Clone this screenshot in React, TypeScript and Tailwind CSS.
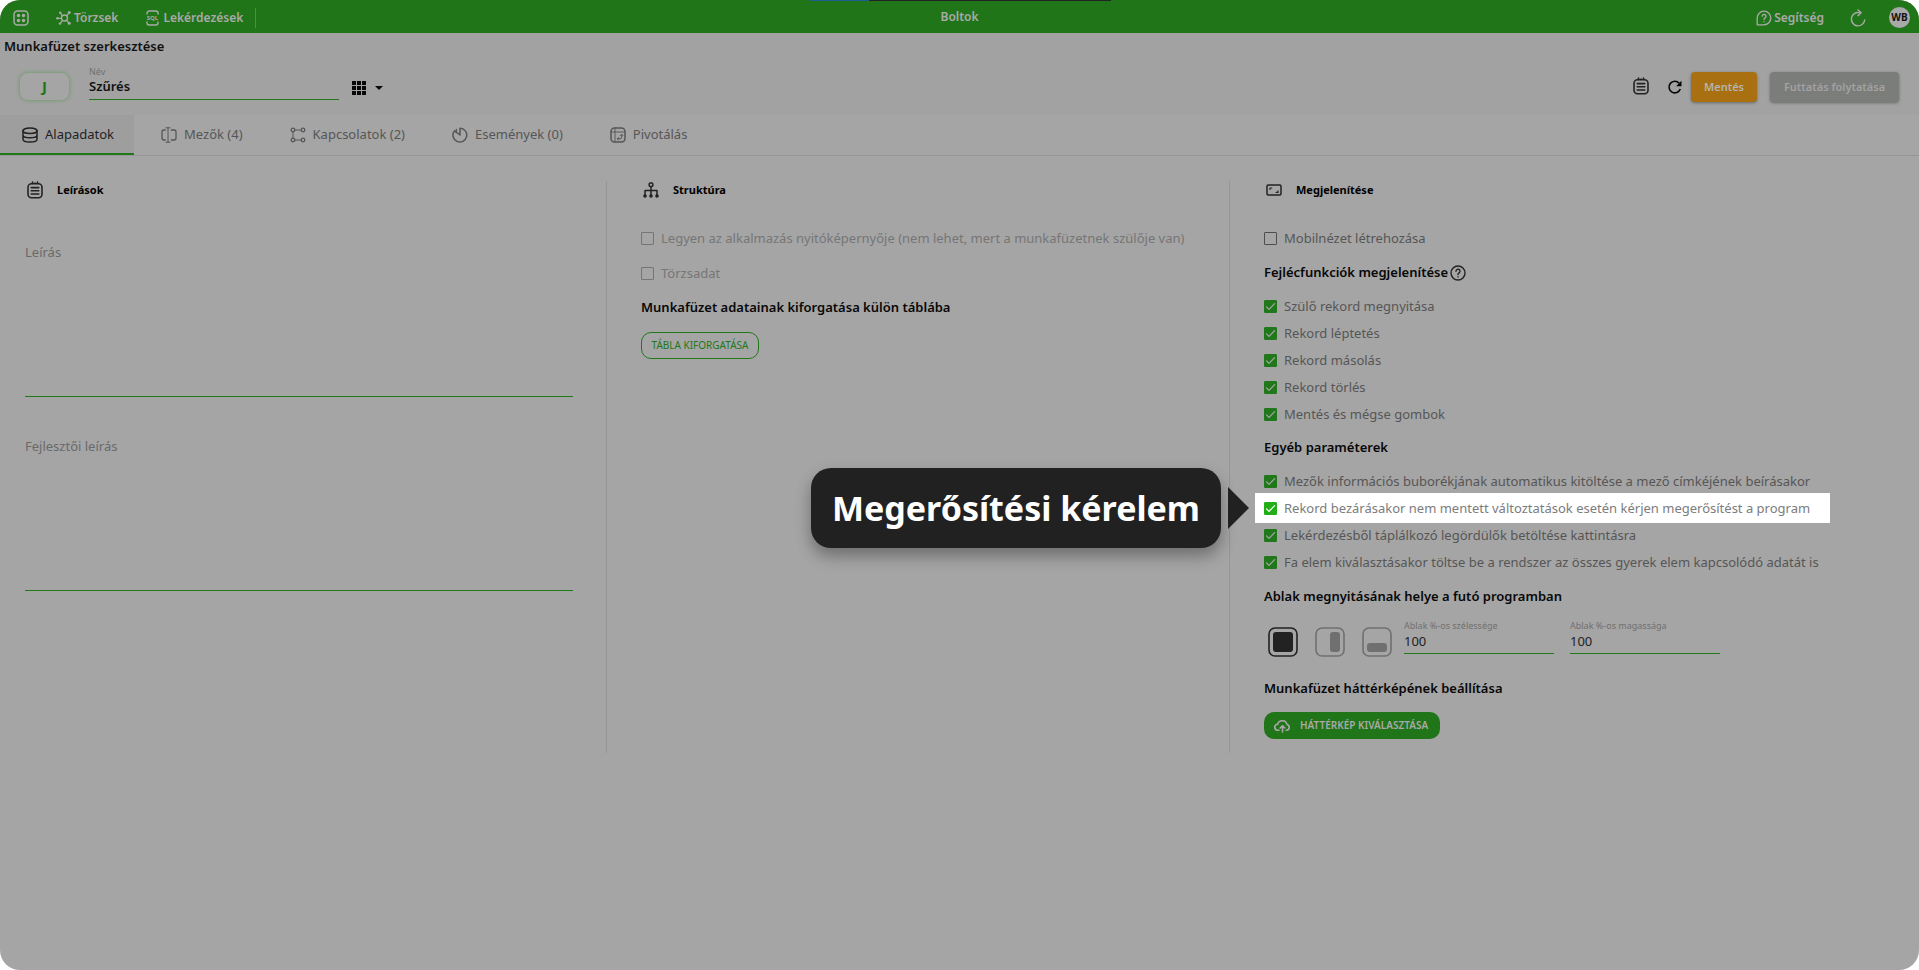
import { useState, type ReactNode } from "react";

const svgProps = {
  fill: "none",
  stroke: "currentColor",
  strokeLinecap: "round" as const,
  strokeLinejoin: "round" as const,
  "aria-hidden": true,
};

/* Icons */
const AppsIcon = () => (
  <svg viewBox="0 0 16 16" className="size-4" {...svgProps} strokeWidth="1.5">
    <rect x="1" y="1" width="14" height="14" rx="3.5" />
    <g fill="currentColor" stroke="none">
      <circle cx="5.5" cy="5.5" r="1.7" />
      <circle cx="10.5" cy="5.5" r="1.7" />
      <circle cx="5.5" cy="10.5" r="1.7" />
      <circle cx="10.5" cy="10.5" r="1.7" />
    </g>
  </svg>
);

const HubIcon = () => (
  <svg viewBox="0 0 16 16" className="size-4" {...svgProps} strokeWidth="1.3">
    <circle cx="8.5" cy="8" r="3" />
    <path d="M6.4 5.8 4.5 3.2M10.6 5.8l2.2-2.6M5.5 8.3H2M6.6 10.3l-2.2 2.9M10.6 10.2l2.2 2.6" />
    <g fill="currentColor" stroke="none">
      <circle cx="4.2" cy="2.8" r="1.2" />
      <circle cx="13.2" cy="2.5" r="1.5" />
      <circle cx="1.4" cy="8.3" r="1.2" />
      <circle cx="3.9" cy="13.6" r="1.2" />
      <circle cx="13.2" cy="13.3" r="1.5" />
    </g>
  </svg>
);

const SqlIcon = () => (
  <svg viewBox="0 0 13 16" className="h-4 w-[13px]" {...svgProps} strokeWidth="1.4">
    <path d="M1 4V3.2A2.2 2.2 0 0 1 3.2 1h6.6A2.2 2.2 0 0 1 12 3.2V4M1 12v.8A2.2 2.2 0 0 0 3.2 15h6.6a2.2 2.2 0 0 0 2.2-2.2V12" />
    <text
      x="6.5"
      y="10.3"
      textAnchor="middle"
      className="font-['Open_Sans',sans-serif] text-[6px] font-bold"
      fill="currentColor"
      stroke="none"
    >
      SQL
    </text>
  </svg>
);

const HelpBubbleIcon = () => (
  <svg viewBox="0 0 16 16" className="size-4" {...svgProps} strokeWidth="1.3">
    <path d="M1.2 14.8V8A6.8 6.8 0 1 1 8 14.8Z" />
    <path d="M6.2 6.2a1.9 1.9 0 1 1 2.9 1.7C8.3 8.4 8 8.7 8 9.5M8 11.6v.1" />
  </svg>
);

const ReloadIcon = () => (
  <svg viewBox="0 0 16 18" className="h-[18px] w-4" {...svgProps} strokeWidth="1.4">
    <path d="M9.5 3.6A6.7 6.7 0 1 0 14.7 11" />
    <path d="M8 1l3.2 2.8L8 6.6" />
  </svg>
);

const RefreshIcon = () => (
  <svg viewBox="0 0 16 16" className="size-4" {...svgProps} strokeWidth="1.6" strokeLinecap="butt">
    <path d="M13.3 10A5.8 5.8 0 1 1 12.2 4.2" />
    <path d="M14.5 1.8v5.4H9.1Z" fill="currentColor" stroke="none" />
  </svg>
);

const NotepadIcon = () => (
  <svg viewBox="0 0 16 18" className="h-[18px] w-4" {...svgProps} strokeWidth="1.6">
    <rect x="1" y="2.8" width="14" height="14" rx="3.5" />
    <path d="M5.5 1v1.5M8 2.5V2M10.5 1v1.5M4.2 6.6h7.6M4.2 9.8h7.6M4.2 13h7.6" />
  </svg>
);

const GridIcon = () => (
  <svg viewBox="0 0 14 14" className="size-3.5" fill="currentColor" aria-hidden>
    {[0, 5, 10].map((y) =>
      [0, 5, 10].map((x) => <rect key={`${x}-${y}`} x={x} y={y} width="4" height="4" />)
    )}
  </svg>
);

const DatabaseIcon = () => (
  <svg viewBox="0 0 16 16" className="size-4" {...svgProps} strokeWidth="1.5">
    <ellipse cx="8" cy="3.8" rx="7" ry="2.8" />
    <path d="M1 3.8v8.4c0 1.6 3.1 2.8 7 2.8s7-1.2 7-2.8V3.8M1 8c0 1.6 3.1 2.8 7 2.8s7-1.2 7-2.8" />
  </svg>
);

const FieldsIcon = () => (
  <svg viewBox="0 0 16 16" className="size-4" {...svgProps} strokeWidth="1.3">
    <path d="M7 .8v14.4M5 .8h4M5 15.2h4" strokeWidth="1" />
    <path d="M4.3 3H3a2 2 0 0 0-2 2v6a2 2 0 0 0 2 2h1.3M10.3 3H13a2 2 0 0 1 2 2v6a2 2 0 0 1-2 2h-2.7" />
  </svg>
);

const RelationsIcon = () => (
  <svg viewBox="0 0 16 16" className="size-4" {...svgProps} strokeWidth="1.3">
    <circle cx="3" cy="3" r="1.8" />
    <circle cx="13" cy="3" r="1.8" />
    <circle cx="3" cy="13" r="1.8" />
    <circle cx="13" cy="13" r="1.8" />
    <path d="M3 5v6M5 3h6M5 13h6" strokeWidth="1" />
  </svg>
);

const EventsIcon = () => (
  <svg viewBox="0 0 16 16" className="size-4" {...svgProps} strokeWidth="1.5">
    <path d="M8 8V1.2a6.9 6.9 0 1 1-5.6 2.7L8 8Z" />
    <path d="M4.3 5.2V2.6" />
  </svg>
);

const PivotIcon = () => (
  <svg viewBox="0 0 16 16" className="size-4" {...svgProps} strokeWidth="1.5">
    <rect x="1" y="1" width="14" height="14" rx="3.5" />
    <path d="M1 5h14M5 1v14" strokeWidth=".9" />
    <path d="M7.5 11.8h2.6a1.6 1.6 0 0 0 1.6-1.6V7.5M10.4 8.6l1.3-1.3L13 8.6M8.6 10.5l-1.3 1.3 1.3 1.3" strokeWidth="1" />
  </svg>
);

const StructureIcon = () => (
  <svg viewBox="0 0 16 16" className="size-4" {...svgProps} strokeWidth="1.5">
    <rect x="6.2" y="1" width="3.6" height="3.6" rx="1" />
    <path d="M8 5v9M2 13V8.4h12V13" />
    <g fill="currentColor" stroke="none">
      <circle cx="2" cy="14" r="1.8" />
      <circle cx="8" cy="14" r="1.8" />
      <circle cx="14" cy="14" r="1.8" />
    </g>
  </svg>
);

const ScreenIcon = () => (
  <svg viewBox="0 0 16 12" className="h-3 w-4" {...svgProps} strokeWidth="1.5">
    <rect x="1" y="1" width="14" height="10" rx="1.2" />
    <path d="M4 5.5V4h1.8M12 6.8v1.6h-1.8" strokeWidth="1.1" />
  </svg>
);

const HelpIcon = () => (
  <svg viewBox="0 0 16 16" className="size-4" {...svgProps} strokeWidth="1.4">
    <circle cx="8" cy="8" r="7" />
    <path d="M6 6.2a2 2 0 1 1 3.1 1.7C8.2 8.5 8 8.8 8 9.6M8 11.8v.1" />
  </svg>
);

const CloudUploadIcon = () => (
  <svg viewBox="0 0 17 14" className="h-3.5 w-[17px]" {...svgProps} strokeWidth="1.6">
    <path d="M5 11.2H4a3 3 0 0 1-.4-6A4.9 4.9 0 0 1 13 5.4a3 3 0 0 1 0 5.8h-.8" />
    <path d="M8.5 13V7M6.2 9l2.3-2.3L10.8 9" />
  </svg>
);

type CheckProps = {
  label: string;
  checked?: boolean;
  disabled?: boolean;
  bright?: boolean;
};

const CheckRow = ({ label, checked = false, disabled, bright }: CheckProps) => (
  <label
    className={`flex items-center gap-[7px] whitespace-nowrap text-[13px] leading-5 ${
      disabled ? "text-[#767676]" : bright ? "text-[#7c7c7c]" : "text-[#565656]"
    }`}
  >
    <span className="grid shrink-0">
      <input
        type="checkbox"
        defaultChecked={checked}
        disabled={disabled}
        className={`peer col-start-1 row-start-1 size-[13px] appearance-none rounded-[1px] border ${
          disabled ? "border-[#757575]" : "border-[#4d4d4d]"
        } ${
          bright
            ? "checked:border-[#22ae15] checked:bg-[#22ae15]"
            : "checked:border-[#21781b] checked:bg-[#21781b]"
        }`}
      />
      <svg
        viewBox="0 0 13 13"
        className={`pointer-events-none invisible col-start-1 row-start-1 size-[13px] peer-checked:visible ${
          bright ? "text-white" : "text-[#a5a5a5]"
        }`}
        {...svgProps}
        strokeWidth="1.2"
      >
        <path d="M2.5 6.8 5 9.3l5.6-5.6" />
      </svg>
    </span>
    {label}
  </label>
);

const SectionTitle = ({ icon, children }: { icon: ReactNode; children: string }) => (
  <h2 className="flex h-[18px] items-center text-[11px] font-bold text-black">
    <span className="flex w-8 pl-0.5 text-[#222]">{icon}</span>
    {children}
  </h2>
);

const SubTitle = ({ children }: { children: ReactNode }) => (
  <h3 className="flex h-5 items-center gap-0.5 text-[13px] font-semibold whitespace-nowrap text-[#080808]">
    {children}
  </h3>
);

const SizeField = ({ id, label }: { id: string; label: string }) => (
  <div className="w-[150px]">
    <label htmlFor={id} className="block text-[9px] leading-3 text-[#707070]">
      {label}
    </label>
    <input
      id={id}
      defaultValue="100"
      className="block h-[22px] w-full border-b border-[#21781b] pb-1 text-[13px] text-[#222] outline-none"
    />
  </div>
);

const tabs = [
  { label: "Alapadatok", icon: <DatabaseIcon /> },
  { label: "Mezők (4)", icon: <FieldsIcon /> },
  { label: "Kapcsolatok (2)", icon: <RelationsIcon /> },
  { label: "Események (0)", icon: <EventsIcon /> },
  { label: "Pivotálás", icon: <PivotIcon /> },
];

const headerFunctions = [
  "Szülő rekord megnyitása",
  "Rekord léptetés",
  "Rekord másolás",
  "Rekord törlés",
  "Mentés és mégse gombok",
];

const placements = [
  { label: "Középen", x: 5, y: 5, width: 20, height: 20 },
  { label: "Jobb oldalon", x: 15, y: 5, width: 10, height: 20 },
  { label: "Alul", x: 5, y: 16, width: 20, height: 9 },
];

const App = () => {
  const [tab, setTab] = useState(0);
  const [placement, setPlacement] = useState(0);

  return (
    <div className="min-h-screen overflow-hidden rounded-[20px] bg-[#a5a5a5] font-['Noto_Sans','Open_Sans',sans-serif]">
      {/* Top bar */}
      <header className="relative grid h-[33px] grid-cols-[1fr_auto_1fr] items-center bg-[#217519] text-[12px] font-semibold text-[#a9a9a9]">
        <div className="absolute top-0 left-[calc(50%-151px)] flex h-px w-[302px]">
          <span className="w-[60px] bg-[#1b5e91]" />
          <span className="flex-1 bg-[#222]" />
        </div>
        <nav className="flex items-center pt-0.5 pl-[13px]">
          <button aria-label="Alkalmazások">
            <AppsIcon />
          </button>
          <a href="#torzsek" className="ml-[27px] flex items-center gap-0.5">
            <HubIcon />
            Törzsek
          </a>
          <a href="#lekerdezesek" className="ml-7 flex items-center gap-1">
            <SqlIcon />
            Lekérdezések
          </a>
          <span className="ml-3 h-5 w-px bg-[#4d8f47]" />
        </nav>
        <span>Boltok</span>
        <div className="flex items-center justify-end pt-0.5 pr-[9px]">
          <a href="#segitseg" className="flex items-center gap-0.5">
            <HelpBubbleIcon />
            Segítség
          </a>
          <button aria-label="Újratöltés" className="ml-[26px]">
            <ReloadIcon />
          </button>
          <button className="ml-[23px] size-[21px] rounded-full bg-[#a9a9a9] text-[10px] font-bold text-[#111]">
            WB
          </button>
        </div>
      </header>

      {/* Workbook header */}
      <div className="h-[82px] bg-[#a2a2a2]">
        <h1 className="px-1 pt-[3px] text-[13px] leading-5 font-semibold text-[#111]">
          Munkafüzet szerkesztése
        </h1>
        <div className="flex items-start pr-5 pl-5">
          <button className="mt-[17px] h-[27px] w-[49px] rounded-lg bg-[#a5a5a5] text-[15px] font-bold text-[#217519] shadow-[0_0_4px_#5f9a5b]">
            J
          </button>
          <div className="mt-2.5 ml-5 w-[250px]">
            <label htmlFor="name" className="block text-[9px] leading-3 text-[#707070]">
              Név
            </label>
            <input
              id="name"
              defaultValue="Szűrés"
              className="block h-[22px] w-full border-b border-[#21781b] pb-1.5 text-[13px] font-semibold text-[#111] outline-none"
            />
          </div>
          <button aria-label="Elrendezés" className="mt-[25px] ml-[13px] flex items-center gap-[9px] text-[#080808]">
            <GridIcon />
            <svg viewBox="0 0 8 4" className="h-1 w-2" fill="currentColor" aria-hidden>
              <path d="M0 0h8L4 4Z" />
            </svg>
          </button>
          <div className="mt-4 ml-auto flex items-center">
            <button aria-label="Jegyzetek" className="pb-[3px] text-[#222]">
              <NotepadIcon />
            </button>
            <button aria-label="Frissítés" className="ml-[18px] text-[#080808]">
              <RefreshIcon />
            </button>
            <button className="ml-2 h-[30px] w-[66px] rounded-sm bg-[#a87010] text-[11px] font-semibold text-[#b4b4b4] shadow-[0_1px_3px_#666]">
              Mentés
            </button>
            <button className="ml-[13px] h-[30px] w-[129px] rounded-sm bg-[#7b7d7b] text-[11px] font-semibold text-[#a2a2a2] shadow-[0_1px_3px_#666]">
              Futtatás folytatása
            </button>
          </div>
        </div>
      </div>

      {/* Tabs */}
      <div role="tablist" className="flex h-[41px] gap-[5px] border-b border-[#959595]">
        {tabs.map((t, i) => (
          <button
            key={t.label}
            role="tab"
            aria-selected={tab === i}
            onClick={() => setTab(i)}
            className={`flex h-10 items-center gap-[7px] border-b-2 pt-0.5 pr-5 pl-[22px] text-[13px] ${
              tab === i
                ? "border-[#21781b] bg-[#9e9e9e] text-[#222]"
                : "border-transparent text-[#565656]"
            }`}
          >
            {t.icon}
            {t.label}
          </button>
        ))}
      </div>

      <main className="grid grid-cols-[607fr_623fr_689fr] pt-[25px]">
        {/* Descriptions */}
        <section className="h-[572px] border-r border-[#959595] pr-[33px] pl-[25px]">
          <SectionTitle icon={<NotepadIcon />}>Leírások</SectionTitle>
          <label htmlFor="description" className="mt-[43px] block text-[13px] leading-5 text-[#6a6a6a]">
            Leírás
          </label>
          <textarea
            id="description"
            className="block h-[135px] w-full resize-none border-b border-[#21781b] outline-none"
          />
          <label htmlFor="dev-description" className="mt-[39px] block text-[13px] leading-5 text-[#6a6a6a]">
            Fejlesztői leírás
          </label>
          <textarea
            id="dev-description"
            className="block h-[135px] w-full resize-none border-b border-[#21781b] outline-none"
          />
        </section>

        {/* Structure */}
        <section className="border-r border-[#959595] pl-[34px]">
          <SectionTitle icon={<StructureIcon />}>Struktúra</SectionTitle>
          <div className="mt-[29px] flex flex-col gap-[15px]">
            <CheckRow
              disabled
              label="Legyen az alkalmazás nyitóképernyője (nem lehet, mert a munkafüzetnek szülője van)"
            />
            <CheckRow disabled label="Törzsadat" />
            <SubTitle>Munkafüzet adatainak kiforgatása külön táblába</SubTitle>
          </div>
          <button className="mt-3.5 h-[27px] w-[118px] rounded-[10px] border border-[#21781b] text-[10px] whitespace-nowrap text-[#21781b]">
            TÁBLA KIFORGATÁSA
          </button>
        </section>

        {/* Appearance */}
        <section className="pl-[34px]">
          <SectionTitle icon={<ScreenIcon />}>Megjelenítése</SectionTitle>
          <div className="mt-[29px] flex flex-col gap-[15px]">
            <CheckRow label="Mobilnézet létrehozása" />
            <SubTitle>
              Fejlécfunkciók megjelenítése
              <span className="text-[#222]">
                <HelpIcon />
              </span>
            </SubTitle>
          </div>
          <div className="mt-[13px] flex flex-col gap-[7px]">
            {headerFunctions.map((label) => (
              <CheckRow key={label} checked label={label} />
            ))}
          </div>

          <div className="mt-3.5">
            <SubTitle>Egyéb paraméterek</SubTitle>
          </div>
          <div className="mt-[13px] flex flex-col gap-[7px]">
            <CheckRow
              checked
              label="Mezők információs buborékjának automatikus kitöltése a mező címkéjének beírásakor"
            />
            <div className="relative -my-[5px] -ml-[9px] flex h-[30px] w-[575px] items-center bg-white pl-[9px]">
              <CheckRow
                checked
                bright
                label="Rekord bezárásakor nem mentett változtatások esetén kérjen megerősítést a program"
              />
              <div
                role="tooltip"
                className="absolute right-full flex items-center gap-[7px] pr-1.5"
              >
                <div className="flex h-20 w-[410px] items-center justify-center rounded-[20px] bg-[#212121] text-[34px] font-bold whitespace-nowrap text-white shadow-[0_8px_16px_#00000055]">
                  Megerősítési kérelem
                </div>
                <svg viewBox="0 0 21 42" className="h-[42px] w-[21px]" fill="#212121" aria-hidden>
                  <path d="M0 0 21 21 0 42Z" />
                </svg>
              </div>
            </div>
            <CheckRow checked label="Lekérdezésből táplálkozó legördülők betöltése kattintásra" />
            <CheckRow
              checked
              label="Fa elem kiválasztásakor töltse be a rendszer az összes gyerek elem kapcsolódó adatát is"
            />
          </div>

          <div className="mt-[15px]">
            <SubTitle>Ablak megnyitásának helye a futó programban</SubTitle>
          </div>
          <div className="mt-[13px] flex items-start">
            <div className="mt-[7px] flex gap-[17px] pl-1">
              {placements.map(({ label, ...shape }, i) => (
                <button
                  key={label}
                  aria-label={label}
                  aria-pressed={placement === i}
                  onClick={() => setPlacement(i)}
                  className={placement === i ? "text-[#222]" : "text-[#707070]"}
                >
                  <svg viewBox="0 0 30 30" className="size-[30px]" aria-hidden>
                    <rect x="1" y="1" width="28" height="28" rx="6" fill="none" stroke="currentColor" strokeWidth="1.6" />
                    <rect {...shape} rx="3" fill="currentColor" />
                  </svg>
                </button>
              ))}
            </div>
            <div className="ml-3 flex gap-4">
              <SizeField id="window-width" label="Ablak %-os szélessége" />
              <SizeField id="window-height" label="Ablak %-os magassága" />
            </div>
          </div>

          <div className="mt-[22px]">
            <SubTitle>Munkafüzet háttérképének beállítása</SubTitle>
          </div>
          <button className="mt-[13px] flex h-[27px] w-44 items-center gap-[9px] rounded-[10px] bg-[#217519] pl-2.5 text-[10px] font-semibold whitespace-nowrap text-[#a9a9a9]">
            <CloudUploadIcon />
            HÁTTÉRKÉP KIVÁLASZTÁSA
          </button>
        </section>
      </main>
    </div>
  );
};

export default App;
